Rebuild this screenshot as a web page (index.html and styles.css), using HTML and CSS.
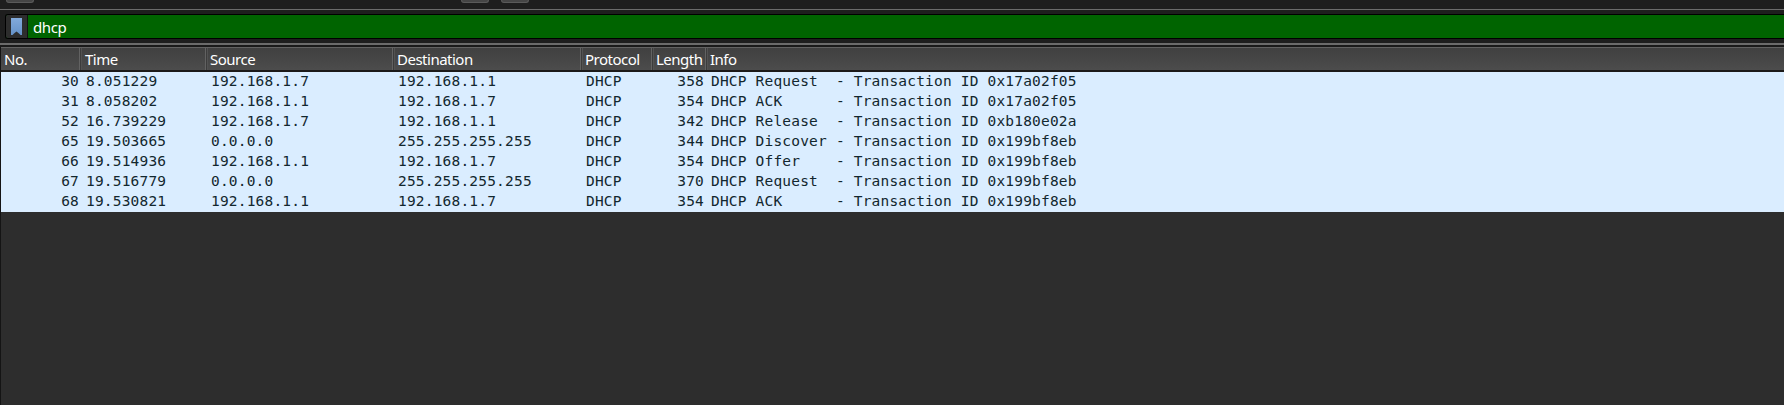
FILE: index.html
```
<!DOCTYPE html>
<html lang="en">
<head>
<meta charset="utf-8">
<title>Packet list</title>
<link rel="stylesheet" href="styles.css">
</head>
<body>
<div class="toolbar"><span class="tool tool-a"></span><span class="tool tool-b"></span><span class="tool tool-c"></span></div>
<div class="filter-bar">
  <div class="filter">
    <div class="bookmark"><svg width="11" height="17" viewBox="0 0 11 17"><defs><linearGradient id="b" x1="0" y1="0" x2="0" y2="1"><stop offset="0" stop-color="#82aadb"/><stop offset="1" stop-color="#6592c8"/></linearGradient></defs><path d="M0 0H11V17H9.5L8 15.5L5.5 13.5L3 15.5L1.5 17H0Z" fill="url(#b)"/></svg></div>
    <div class="query">dhcp</div>
  </div>
</div>
<div class="splitter"></div>
<div class="packets">
  <div class="grid head"><span>No.</span><span>Time</span><span>Source</span><span>Destination</span><span>Protocol</span><span>Length</span><span>Info</span></div>
  <div class="grid row"><span class="num">30</span><span class="time">8.051229</span><span>192.168.1.7</span><span>192.168.1.1</span><span>DHCP</span><span class="num len">358</span><span>DHCP Request  - Transaction ID 0x17a02f05</span></div>
  <div class="grid row"><span class="num">31</span><span class="time">8.058202</span><span>192.168.1.1</span><span>192.168.1.7</span><span>DHCP</span><span class="num len">354</span><span>DHCP ACK      - Transaction ID 0x17a02f05</span></div>
  <div class="grid row"><span class="num">52</span><span class="time">16.739229</span><span>192.168.1.7</span><span>192.168.1.1</span><span>DHCP</span><span class="num len">342</span><span>DHCP Release  - Transaction ID 0xb180e02a</span></div>
  <div class="grid row"><span class="num">65</span><span class="time">19.503665</span><span>0.0.0.0</span><span>255.255.255.255</span><span>DHCP</span><span class="num len">344</span><span>DHCP Discover - Transaction ID 0x199bf8eb</span></div>
  <div class="grid row"><span class="num">66</span><span class="time">19.514936</span><span>192.168.1.1</span><span>192.168.1.7</span><span>DHCP</span><span class="num len">354</span><span>DHCP Offer    - Transaction ID 0x199bf8eb</span></div>
  <div class="grid row"><span class="num">67</span><span class="time">19.516779</span><span>0.0.0.0</span><span>255.255.255.255</span><span>DHCP</span><span class="num len">370</span><span>DHCP Request  - Transaction ID 0x199bf8eb</span></div>
  <div class="grid row"><span class="num">68</span><span class="time">19.530821</span><span>192.168.1.1</span><span>192.168.1.7</span><span>DHCP</span><span class="num len">354</span><span>DHCP ACK      - Transaction ID 0x199bf8eb</span></div>
</div>
</body>
</html>
```
FILE: styles.css
```
* { box-sizing: border-box; }
body {
  margin: 0;
  height: 405px;
  display: flex;
  flex-direction: column;
  overflow: hidden;
  background: #1e1e1e;
  font-family: "Noto Sans", "Open Sans", sans-serif;
  color: #fff;
}
.toolbar {
  height: 10px;
  flex: none;
  display: flex;
  align-items: flex-start;
  padding-left: 6px;
  border-bottom: 1px solid #6b6b6b;
}
.tool {
  width: 28px;
  height: 3px;
  background: #454545;
  border: 1px solid #5a5a5a;
  border-top: 0;
  border-radius: 0 0 3px 3px;
}
.tool-b { margin-left: 427px; }
.tool-c { margin-left: 12px; }
.filter-bar { height: 33px; flex: none; padding: 4px 0 4px 5px; }
.filter {
  height: 25px;
  display: flex;
  border: 1px solid #000;
  border-right: 0;
  border-radius: 3px 0 0 3px;
  background: #006400;
  overflow: hidden;
}
.bookmark {
  width: 22px;
  padding: 3px 0 0 5px;
  background: #2d2d2d;
  border-right: 1px solid #111;
}
.bookmark svg { display: block; }
.query {
  padding-left: 5px;
  font-size: 15px;
  letter-spacing: -0.4px;
  line-height: 24px;
}
.splitter {
  height: 4px;
  flex: none;
  background: linear-gradient(#6b6b6b 2px, #1a1a1a 2px);
}
.packets {
  flex: 1;
  background: #2d2d2d;
  border-left: 1px solid #141414;
}
.grid {
  display: grid;
  grid-template-columns: 79px 126px 187px 188px 71px 54px 1fr;
}
.head {
  height: 25px;
  background: linear-gradient(#404040, #4c4c4c);
  border-top: 1px solid #626262;
  border-bottom: 2px solid #1c1a19;
  font-size: 15px;
  letter-spacing: -0.5px;
  line-height: 22px;
}
.head span {
  height: 22px;
  padding-left: 4px;
  border-right: 1px solid #626262;
  box-shadow: 1px 0 0 #3c3c3c, 2px 0 0 #525252;
  white-space: nowrap;
}
.head span:first-child { padding-left: 3px; }
.head span:nth-child(2) { padding-left: 5px; }
.head span:last-child { border-right: 0; }
.row {
  height: 20px;
  background: #daedff;
  color: #12272e;
  font-family: "DejaVu Sans Mono", monospace;
  font-size: 14.5px;
  letter-spacing: 0.19px;
  line-height: 19px;
  white-space: pre;
}
.row span { padding-left: 5px; }
.row .time { padding-left: 6px; }
.row .num { padding: 0 1px 0 0; text-align: right; }
.row .len { padding-right: 2px; }
```
